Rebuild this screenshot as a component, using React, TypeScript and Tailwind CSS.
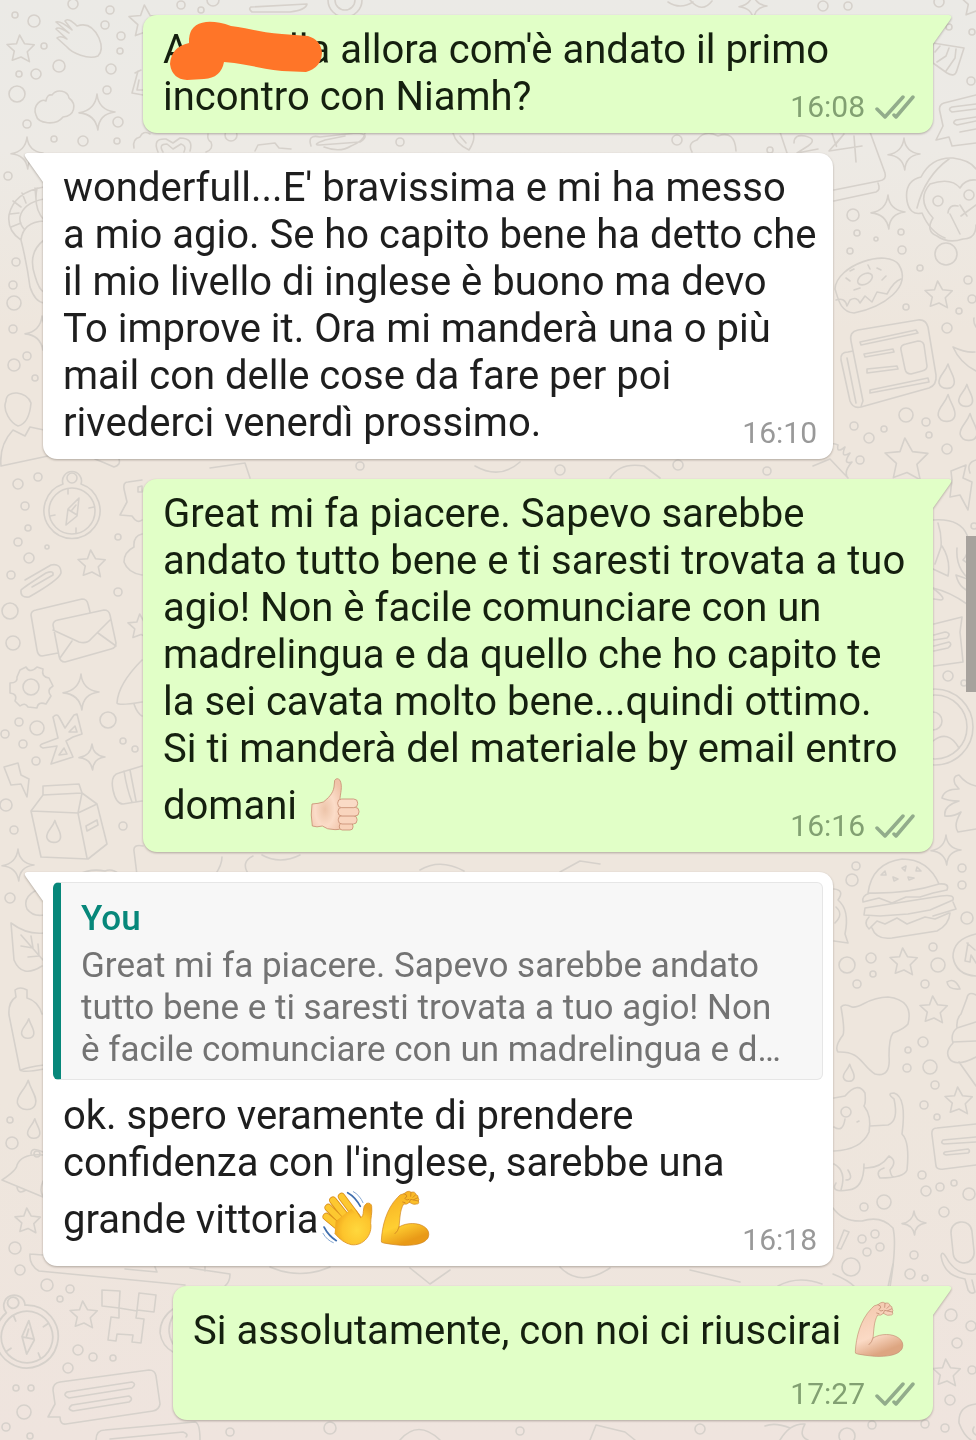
import type { ReactNode } from "react";

type Dot = [number, number, number];

const dots: Dot[] = [
  [15, 15, 3], [34, 21, 6], [73, 4, 5], [110, 10, 4], [105, 25, 4], [121, 36, 4], [120, 51, 3], [44, 46, 3],
  [19, 74, 3], [36, 74, 5], [59, 66, 6], [111, 69, 5], [17, 94, 8], [107, 90, 4], [27, 124, 4], [118, 122, 5],
  [54, 139, 3], [83, 141, 5], [117, 141, 3], [8, 176, 4], [181, 5, 4], [201, 10, 3], [231, 135, 6], [213, 0, 6],
  [823, 6, 5], [848, 6, 4], [939, 2, 5], [949, 27, 3], [972, 32, 3], [971, 81, 4], [677, 140, 5], [770, 150, 3],
  [853, 215, 6], [857, 233, 3], [876, 239, 2], [901, 232, 3], [850, 251, 3], [902, 250, 4], [920, 268, 3],
  [906, 307, 3], [968, 280, 4], [972, 299, 4], [959, 311, 3], [947, 328, 5], [906, 415, 7], [854, 426, 4],
  [869, 438, 5], [884, 429, 3], [926, 422, 4], [929, 435, 3], [947, 449, 5], [860, 460, 4], [678, 465, 5],
  [767, 471, 4], [16, 262, 4], [13, 285, 4], [14, 303, 7], [13, 329, 4], [27, 356, 4], [14, 365, 6], [35, 378, 3],
  [18, 484, 5], [38, 477, 4], [25, 506, 4], [28, 528, 3], [18, 542, 4], [47, 547, 2], [29, 558, 5], [11, 575, 4],
  [10, 611, 8], [13, 643, 7], [118, 537, 3], [118, 592, 4], [19, 722, 4], [5, 734, 4], [37, 728, 7], [23, 744, 4],
  [36, 761, 4], [108, 720, 8], [123, 741, 3], [135, 749, 3], [6, 805, 6], [14, 830, 4], [123, 826, 4],
  [948, 676, 5], [964, 683, 3], [974, 526, 3], [856, 866, 4], [852, 880, 6], [962, 868, 4], [962, 885, 4],
  [967, 918, 6], [847, 965, 8], [871, 958, 5], [873, 974, 3], [857, 984, 4], [933, 947, 4], [938, 965, 7],
  [925, 984, 4], [908, 1050, 3], [923, 1042, 5], [907, 1068, 4], [930, 1067, 7], [935, 1085, 4], [924, 1105, 4],
  [937, 1117, 3], [922, 1175, 4], [926, 1191, 5], [940, 1187, 4], [954, 1183, 3], [969, 1194, 6], [944, 1212, 5],
  [864, 1207, 4], [884, 1202, 7], [862, 1239, 4], [875, 1234, 4], [867, 1252, 4], [880, 1247, 4], [851, 1267, 9],
  [914, 1255, 4], [910, 1274, 5], [925, 1278, 3], [951, 1315, 6], [971, 1326, 5], [957, 1343, 5], [972, 1370, 4],
  [950, 1400, 5], [925, 1424, 4], [872, 1425, 4], [847, 1436, 8], [945, 1428, 4], [10, 898, 5], [10, 1120, 3],
  [12, 1143, 6], [15, 1248, 6], [20, 1270, 5], [47, 1285, 6], [70, 1289, 4], [60, 1299, 3], [78, 1350, 5],
  [93, 1357, 4], [113, 1358, 3], [68, 1368, 5], [16, 1388, 3], [31, 1388, 3], [24, 1412, 7], [6, 1427, 4], [30, 1436, 3],
  [230, 1432, 4], [330, 1428, 6], [520, 1431, 4], [700, 1429, 5], [360, 466, 4], [560, 470, 5], [400, 142, 4],
];

const stars: Dot[] = [
  [21, 49, 14], [146, 22, 17], [939, 295, 14], [907, 460, 22], [92, 564, 14], [141, 627, 13], [904, 962, 14],
  [934, 1010, 14], [959, 1101, 14], [947, 1373, 14], [28, 1221, 13], [84, 1315, 14], [976, 2, 16],
];

const sparks: Dot[] = [
  [97, 112, 18], [27, 153, 16], [904, 154, 16], [888, 212, 17], [81, 692, 18], [92, 757, 13], [18, 865, 16],
  [946, 850, 15], [914, 1223, 12], [753, 6, 14], [42, 333, 17],
];

const drops: Dot[] = [
  [947, 378, 10], [966, 397, 9], [947, 410, 11], [969, 429, 11], [849, 1074, 7], [28, 1030, 8],
  [27, 1097, 12], [34, 1130, 8], [54, 833, 9],
];

const starPath = "M-.1-1L.25-.38L.95-.3L.45.2L.6.9L0 .57L-.62.8L-.48.15L-1-.32L-.32-.38Z";
const sparkPath = "M0-1Q.08-.12 1 0Q.1.1 .05 1Q-.1.12-1 .05Q-.1-.1 0-1Z";
const dropPath = "M.1-1.4C.35-.5 .9 0 .7.6C.5 1.2-.6 1.2-.8.5C-.9-.2-.2-.5 .1-1.4Z";

function Shapes({ items, d }: { items: Dot[]; d: string }) {
  return (
    <>
      {items.map(([x, y, r]) => (
        <path key={`${x}-${y}`} d={d} transform={`translate(${x} ${y}) scale(${r})`} vectorEffect="non-scaling-stroke" />
      ))}
    </>
  );
}

function Compass({ x, y, s = 1, tilt = 0 }: { x: number; y: number; s?: number; tilt?: number }) {
  return (
    <g transform={`translate(${x} ${y}) scale(${s}) rotate(${tilt})`}>
      <path d="M-9-27A28 28 0 1 0 9-27A9.500 9.500 0 1 0-9-27Z" />
      <circle r="23" />
      <circle cy="-33" r="5" />
      <path d="M7-13L5 5L-6 14L-4-2ZM-3-1L5 4M0-1L4-6M-4-22L-4-17M4 22V17M-22 5L-17 4M22-4L17-3" />
    </g>
  );
}

function Wallpaper() {
  return (
    <svg
      aria-hidden="true"
      className="absolute inset-0 h-[1440px] w-full text-[#d6d1cb]"
      viewBox="0 0 976 1440"
      preserveAspectRatio="xMidYMin slice"
      fill="none"
      stroke="currentColor"
      strokeWidth="1.6"
      strokeLinecap="round"
      strokeLinejoin="round"
    >
      {dots.map(([x, y, r]) => (
        <circle key={`${x}-${y}`} cx={x} cy={y} r={r} />
      ))}
      <Shapes items={stars} d={starPath} />
      <Shapes items={sparks} d={sparkPath} />
      <Shapes items={drops} d={dropPath} />
      <Compass x={72} y={511} />
      <Compass x={27} y={1337} s={1.12} tilt={-22} />

      {/* glove, cloud, planet, ring */}
      <path d="M98 56C88 60 72 53 67 47L57 38Q60 35 67 39L56 29Q58 26 69 33L56 22Q60 20 72 30L65 21Q68 17 77 26Q91 21 99 38Q104 50 98 56Z" />
      <path d="M52 95C57 88 68 91 69 98C77 104 75 116 63 117C56 126 38 124 36 115C32 105 42 98 46 101Q47 94 52 95Z" />
      <path d="M135 73L141 70M138 71L132 93L143 95M139 80L137 90H143" />
      <circle cx="345" cy="0" r="17" /><circle cx="345" cy="0" r="10" />
      <path d="M251 7L307 4Q306 10 290 12L252 12Q248 9 251 7Z" />
      <path d="M134 148Q132 139 140 137Q143 130 150 134M208 134Q207 140 211 142Q214 149 206 152M158 152Q152 138 166 139L173 143L180 138Q194 138 190 151M163 152Q158 144 167 144L173 149L181 144Q187 146 184 152" />
      <path d="M311 146Q307 134 320 137L356 133Q372 134 360 142L320 145Q311 145 325 140L345 136M324 147Q340 153 351 146Q364 141 365 133" />
      <path d="M255 151L258 145L275 143L279 148L291 149M453 133Q456 144 469 150Q476 139 473 133M460 136L466 143" />
      <path d="M692 152Q687 143 697 140Q705 129 718 136Q735 130 736 151M668 2Q680 10 693 2M690 0Q702 14 712 1" />
      {/* fan, chat card and calendar */}
      <path d="M933 43L964 48L957 70Q955 78 947 73L933 63ZM940 46L935 52M949 48L946 56L937 62M956 49L955 58L946 71" />
      <path d="M976 95L944 103Q938 105 940 112L943 126L936 140L949 137L952 146L976 143M976 104L952 107Q947 109 952 112L976 109M976 117L956 120Q951 123 957 125L976 121M976 129L960 132" />
      <path d="M780 132L787 153M870 132L885 173Q887 180 879 181L834 190M834 201L876 192Q881 190 878 183M794 143Q794 134 805 136Q818 139 808 146L797 153L818 149M832 133Q838 152 836 144L844 134L829 151L862 146M854 136L856 162" />
      {/* monkey */}
      <path d="M922 213Q910 216 907 201Q904 181 921 177Q931 157 953 158Q970 160 976 169M922 213Q930 232 945 238M917 208Q925 176 949 159" />
      <path d="M976 180Q965 179 960 188Q951 177 930 184Q916 200 933 218Q925 231 937 236Q948 244 963 239Q976 239 976 225M950 214L960 234M960 205L967 216M976 205L961 216M948 213Q949 204 958 206" />
      <circle cx="938" cy="201" r="5" /><circle cx="969" cy="195" r="5" /><circle cx="946" cy="254" r="11" />
      {/* doughnut */}
      <path d="M835 289C836 265 888 248 899 265C912 287 884 307 854 313C840 312 838 298 835 289ZM836 300Q845 297 847 306L850 300Q857 296 860 303L865 296L872 302L877 292L887 294Q894 281 901 279" />
      <ellipse cx="865" cy="279" rx="8" ry="5" transform="rotate(-30 865 279)" />
      <path d="M846 278L850 281M854 290L860 288M877 268L881 270M868 265L870 269M882 280L886 276M850 271L854 269" />
      {/* newspaper */}
      <path d="M851 341Q849 332 858 330L918 320Q926 319 928 327L936 375Q937 385 929 388L861 407Q853 409 850 401L841 360Q840 352 848 352L853 351L863 401Q861 406 861 407M851 341L863 401M847 358L856 403" />
      <path d="M860 342L916 330L918 333L861 345ZM864 354L893 349L894 352L865 357ZM867 369L897 366L898 369L867 373ZM870 390L928 378L929 382L870 393ZM901 350Q900 345 906 344L918 341Q923 341 924 345L927 366Q927 370 922 371L911 374Q906 374 905 369Z" />
      <path d="M953 347Q966 353 975 352M953 347Q960 363 976 371M974 318Q973 322 976 327M970 473Q966 463 976 460M813 466L830 459L848 478M832 449Q829 441 838 445Q836 454 845 447Q840 459 850 453Q842 465 852 462Q843 472 848 478" />
      {/* roller and face on the left margin */}
      <path d="M44 187Q14 192 9 215Q7 231 21 240M44 199Q23 203 20 217Q19 223 24 229M21 240Q23 222 44 221M21 240Q27 264 30 287Q35 302 44 303M44 240Q27 253 35 276Q39 290 44 292M13 201L21 207M10 214L19 213M11 227L21 223M22 193L26 203M35 188L36 199M37 188Q33 208 44 220" />
      <path d="M6 401C6 389 27 391 31 403C30 414 27 424 18 426C11 423 2 411 6 401ZM1 466Q-1 445 13 430L19 433L25 436L30 427L44 430M1 466L48 456M95 459Q105 463 114 467Q121 465 119 459" />
      {/* paper clip and letters */}
      <path d="M25 580L51 565Q61 563 61 573Q59 580 29 597Q20 598 21 590Q24 587 46 573Q54 570 53 575L32 587" />
      <path d="M58 653L42 656Q38 656 37 650L31 615Q31 611 36 610L82 599Q87 599 88 604L90 612M53 625Q53 621 58 620L104 610Q109 610 110 615L116 643Q116 648 111 649L65 662Q60 662 59 656ZM53 630L79 642Q87 644 91 639L110 620M60 658L72 641M98 633L116 646" />
      {/* gear */}
      <path d="M20 670L26 667Q30 674 37 667L43 669Q41 677 49 678L53 686Q46 690 51 696L46 704Q38 701 37 708L28 707Q25 702 20 706L15 701Q18 694 10 693V683Q18 683 17 677Z" />
      <circle cx="31" cy="687" r="8" />
      <path d="M142 660Q118 684 117 703Q119 706 142 702M134 704Q137 713 142 716M142 480L128 482Q123 482 124 489L127 502L120 515L132 516Q137 524 142 520M138 487L142 486V492H138ZM142 534Q133 536 134 547Q124 552 124 562Q128 573 142 575" />
      <path d="M53 717Q57 713 59 717L65 728L74 715L77 714L82 734L73 737L66 741L73 757L51 764L57 746L43 748Q38 746 42 744L58 738ZM69 732L75 726L77 732ZM59 755L64 748L67 754Z" />
      <path d="M4 767L18 763L21 775L29 779L27 797L21 784L11 785ZM43 786L79 784L82 793L97 804L107 844L88 859L41 857L31 811L43 795ZM31 811L78 813L87 858M78 813L97 804M82 793L43 795M82 793L78 813M86 826L97 820L98 825L87 831Z" />
      <path d="M142 766L119 773Q110 775 113 790Q116 804 123 804L142 801M124 771Q127 790 132 802M130 770L136 801M143 846Q133 844 134 851L137 875M222 857Q222 865 215 875M249 875Q240 862 253 856M262 855Q280 865 300 855M78 875Q90 868 105 871Q112 868 119 874M420 870Q440 858 464 871M560 872L580 861L600 864" />
      {/* bolt, unicorn, banner, avatar, splat */}
      <path d="M951 471L966 465L963 478L972 482L968 510L960 495L950 497L952 480ZM933 520Q960 518 967 535Q971 551 963 560L976 569M938 523Q942 535 941 547L935 564M942 546Q951 560 948 576L933 569M957 548Q955 572 976 584M956 575L976 582M956 575Q960 592 976 592M933 588Q950 592 967 604M934 589Q947 599 941 600L934 599" />
      <path d="M934 624L962 617L960 632L963 662L934 666M934 635L945 632Q952 633 947 638L934 640M934 646L949 642Q953 644 948 648L934 651" />
      <circle cx="935" cy="727" r="38" /><circle cx="935" cy="727" r="32" /><circle cx="933" cy="721" r="9" />
      <path d="M933 741Q948 729 959 748M976 786Q966 784 959 775Q952 776 955 784L959 789Q944 789 942 798Q948 801 959 801Q943 806 945 816Q953 817 961 812Q953 825 958 832L976 829" />
      {/* burger */}
      <path d="M868 893Q872 863 902 859Q928 859 939 884Q908 894 868 893ZM939 884Q950 883 947 890L933 893L920 897L906 897L892 903L879 898L863 902Q861 896 870 893M865 908L941 896Q955 894 953 900L930 910L908 914L880 916L864 915ZM953 902L956 909L933 916M869 917Q863 923 869 929L877 921L885 924L897 918L907 924L925 917L935 919L949 913M872 928Q876 940 892 938L937 931Q949 925 950 913" />
      <path d="M881 875L885 871L886 875ZM893 877L898 879L894 881ZM902 868L906 866L905 871ZM908 877L914 878L909 880ZM917 867L921 871L916 871ZM834 889Q845 890 838 900Q850 910 845 934L848 943L834 941M836 907Q844 914 835 923" />
      {/* clock, map, cone */}
      <path d="M976 934Q953 939 953 957Q956 975 976 976M967 943L975 950M968 943L965 961L970 962L971 955L976 963M947 982Q955 977 960 989Q948 990 947 982ZM976 995Q968 991 967 998L961 1014Q956 1019 957 1028Q950 1034 953 1043Q945 1051 949 1058Q955 1068 976 1057M957 1028L976 1022M953 1042L976 1041M959 1062L976 1086" />
      <path d="M841 1007Q844 1003 852 1007C861 1009 867 997 888 997Q914 1000 908 1024Q904 1029 893 1033Q889 1038 889 1056Q891 1078 875 1074C861 1065 861 1051 838 1052Q834 1047 843 1035Q845 1030 841 1007Z" />
      {/* cat */}
      <path d="M834 1098L845 1096Q858 1081 865 1093Q866 1103 864 1106Q872 1116 869 1132Q861 1150 834 1151M870 1126L888 1125Q899 1121 894 1099Q886 1093 894 1093Q907 1097 902 1134Q910 1142 907 1170Q904 1178 880 1178Q875 1171 884 1168M864 1164Q864 1189 848 1190Q830 1193 836 1183M834 1164Q847 1171 841 1190M864 1168Q880 1169 889 1156Q898 1161 890 1170Q891 1177 894 1177M848 1170Q854 1180 846 1180M834 1127Q843 1133 845 1119M857 1122L859 1121" />
      <circle cx="846" cy="1112" r="5" />
      <path d="M976 1124L937 1128Q931 1128 932 1135L936 1166Q937 1170 944 1169L976 1165M976 1137L943 1140Q940 1143 944 1144L976 1142M945 1152L968 1149Q971 1151 968 1153L946 1155Q942 1154 945 1152ZM833 1208Q843 1222 862 1221Q881 1215 893 1228Q897 1244 890 1287M833 1274Q848 1280 855 1287M844 1230L849 1232L841 1249L837 1248Z" />
      {/* microphone */}
      <rect x="952" y="1222" width="21" height="41" rx="10" transform="rotate(-6 962 1242)" />
      <path d="M976 1274Q956 1276 946 1257Q942 1250 941 1256Q944 1276 965 1279L968 1290Q971 1295 975 1292L972 1280" />
      <path d="M976 1404Q958 1406 959 1423Q964 1436 971 1440M974 1427Q971 1432 976 1435M780 1440Q790 1423 805 1424Q798 1436 808 1440M790 1428Q775 1422 765 1426M778 1286Q798 1275 822 1284M888 1287L893 1264" />
      {/* leaf, bottle and bell */}
      <path d="M11 923Q27 935 44 933M11 923L14 960Q22 979 42 966M21 935L43 960M21 946L33 948L31 936M28 957L39 956L38 944M44 887Q21 895 27 909Q33 917 44 915M16 997L15 990Q20 986 27 990V998Q38 1001 42 1014M16 997Q8 1002 9 1015L20 1070Q23 1073 44 1069M21 1070Q28 1067 44 1065" />
      <path d="M2 1180Q17 1170 17 1165Q22 1153 43 1155M2 1180L43 1197M17 1187Q18 1195 26 1190M31 1154Q31 1146 43 1152M43 1181Q39 1191 43 1196" /><circle cx="37" cy="1154" r="3" />
      {/* skateboard, pixel art, chat cards */}
      <path d="M30 1254L43 1255M30 1254Q29 1265 39 1271L185 1285M155 1267L157 1272L125 1269M190 1268L230 1274Q230 1282 225 1286M205 1267V1271M270 1267Q300 1280 330 1267M410 1268L430 1284L450 1270M560 1267Q580 1288 610 1268M690 1270L740 1282" />
      <path d="M102 1290L120 1291L119 1308L102 1306ZM139 1293L156 1295L154 1312L137 1310ZM119 1308L119 1318L111 1317L108 1340L116 1341L117 1334L133 1335L132 1342L141 1343L144 1319L136 1318L137 1311ZM173 1309Q160 1318 160 1333Q162 1346 173 1352M173 1316Q165 1330 173 1344" />
      <path d="M53 1390Q53 1383 60 1382L149 1370Q155 1370 156 1376L160 1404Q159 1410 153 1411L66 1424Q60 1425 60 1417L48 1417L55 1404ZM67 1392L132 1382Q137 1384 132 1388L69 1398Q62 1395 67 1392ZM72 1405L129 1396Q134 1399 129 1402L73 1411Q66 1409 72 1405ZM96 1440Q96 1430 105 1430L195 1422Q200 1423 200 1440M110 1439L183 1432Q189 1434 186 1437" />
      <path d="M400 1440Q418 1419 440 1440M590 1440L596 1425L625 1432L635 1440M475 466Q500 480 520 462M210 468L245 463L250 478M610 478Q620 462 644 466L660 478" />
    </svg>
  );
}

function Ticks() {
  return (
    <svg role="img" aria-label="Delivered" className="h-6 w-10" viewBox="0 0 40 24" fill="none" stroke="#92ac8b" strokeWidth="3.500" strokeLinecap="round" strokeLinejoin="round">
      <path d="M2 14L10 22L28 2M19 20L21 22L38 2" />
    </svg>
  );
}

function Time({ value, sent = false }: { value: string; sent?: boolean }) {
  return (
    <span className={`flex shrink-0 items-center gap-2.5 text-[30px] leading-8 ${sent ? "text-[#82a072]" : "text-[#999999]"}`}>
      <time>{value}</time>
      {sent && <Ticks />}
    </span>
  );
}

function Thumb() {
  return (
    <svg role="img" aria-label="Thumbs up" className="-ml-0.5 inline-block size-15 align-[-17px]" viewBox="75 51 180 180">
      <defs>
        <radialGradient id="thumbSkin" cx=".45" cy=".6" r=".65">
          <stop offset="0" stopColor="#edc4a9" />
          <stop offset=".5" stopColor="#fbdcc8" />
          <stop offset="1" stopColor="#f0c3a8" />
        </radialGradient>
      </defs>
      <g stroke="#c98f74" strokeWidth="2.500" strokeLinejoin="round">
        <path fill="url(#thumbSkin)" d="M96 135Q115 134 130 129C144 118 159 104 162 84L164 64Q171 54 180 64C189 83 180 105 180 122L185 205Q180 214 165 212Q140 212 127 201Q110 206 97 201Q91 168 96 135Z" />
        <rect fill="#f8d2b9" x="178" y="192" width="41" height="21" rx="9" />
        <rect fill="#f9d5be" x="175" y="170" width="56" height="25" rx="11" />
        <rect fill="#f9d5be" x="174" y="145" width="63" height="26" rx="12" />
        <rect fill="#fadbc6" x="173" y="120" width="60" height="26" rx="12" />
      </g>
    </svg>
  );
}

function Wave() {
  return (
    <svg role="img" aria-label="Waving hand" className="-ml-0.5 inline-block size-15 align-[-17px]" viewBox="45 63 180 180">
      <defs>
        <radialGradient id="palm" cx=".6" cy=".65" r=".6">
          <stop offset="0" stopColor="#ffd83d" />
          <stop offset=".65" stopColor="#fdc42c" />
          <stop offset="1" stopColor="#f0a71e" />
        </radialGradient>
      </defs>
      <g fill="none" strokeLinecap="round">
        <path stroke="#dc931f" strokeWidth="23" d="M119 83L165 145M93 94L145 160M79 116L135 172M73 143L130 190" />
        <path stroke="#fdc830" strokeWidth="18" d="M119 83L165 145" />
        <path stroke="#dc931f" strokeWidth="22" d="M96 98L145 160" />
        <path stroke="#fdc830" strokeWidth="18" d="M93 94L145 160" />
        <path stroke="#dc931f" strokeWidth="22" d="M83 120L135 172" />
        <path stroke="#fdc830" strokeWidth="18" d="M79 116L135 172" />
        <path stroke="#dc931f" strokeWidth="22" d="M78 147L130 190" />
        <path stroke="#fdc830" strokeWidth="18" d="M73 143L130 190" />
      </g>
      <path fill="url(#palm)" d="M101 157L148 119L176 146Q184 143 184 127Q184 109 194 103Q207 100 209 112C211 134 206 146 206 163C212 196 185 232 148 227Q122 222 98 193Z" />
      <path fill="none" stroke="#dc931f" strokeWidth="2.500" d="M162 124L176 146Q184 143 184 127Q184 109 194 103Q207 100 209 112C211 134 206 146 206 163C212 196 185 232 148 227Q122 222 98 193" />
      <path fill="none" stroke="#406fae" strokeWidth="5" strokeLinecap="round" d="M137 71Q160 84 175 112M66 174Q80 201 103 215" />
      <path fill="none" stroke="#86a8d2" strokeWidth="3" strokeLinecap="round" d="M154 68Q173 78 183 101M63 193Q75 214 94 221" />
    </svg>
  );
}

function Arm({ light = false }: { light?: boolean }) {
  const id = light ? "armLight" : "armGold";
  const line = light ? "#c48e74" : "#cf8420";
  return (
    <svg role="img" aria-label="Flexed biceps" className="-ml-0.5 inline-block size-15 align-[-17px]" viewBox="225 63 180 180">
      <defs>
        <linearGradient id={id} x1="0" y1="0" x2=".35" y2="1">
          <stop offset="0" stopColor={light ? "#f2c5aa" : "#f5aa20"} />
          <stop offset=".68" stopColor={light ? "#fbdac5" : "#ffcf32"} />
          <stop offset="1" stopColor={light ? "#dda581" : "#e99a17"} />
        </linearGradient>
      </defs>
      <path
        fill={`url(#${id})`}
        stroke={line}
        strokeWidth="2"
        strokeLinejoin="round"
        d="M244 215C246 172 259 120 292 86Q299 75 312 74Q326 62 333 70Q346 66 348 77Q356 79 354 86Q359 91 355 96Q359 105 350 105Q341 109 328 100Q321 108 311 105C299 125 300 150 297 174C320 160 355 160 374 174Q392 187 384 207C371 227 337 230 302 229Q270 226 251 222Q242 221 244 215Z"
      />
      <path fill="none" stroke={line} strokeWidth="2.500" strokeLinecap="round" d="M297 174Q294 187 285 194M312 74Q322 76 320 84Q309 88 321 93L327 91M333 70L332 82M347 77L339 85M354 86L341 92M328 100L332 91L355 96M308 99L315 101" />
    </svg>
  );
}

function Bubble({ sent = false, width, children }: { sent?: boolean; width: string; children: ReactNode }) {
  return (
    <article
      className={`relative ${width} max-w-full rounded-[14px] pt-[11px] pb-[13px] pl-5 drop-shadow-[0_1px_1px_rgba(80,70,60,0.4)] ${
        sent ? "self-end rounded-tr-none bg-[#e1ffc7] pr-[18px] text-[#15200f]" : "self-start rounded-tl-none bg-white pr-4 text-[#1e1e1e]"
      }`}
    >
      <svg
        aria-hidden="true"
        className={`absolute top-0 h-[30px] w-5 ${sent ? "left-full fill-[#e1ffc7]" : "right-full -scale-x-100 fill-white"}`}
        viewBox="0 0 20 30"
      >
        <path d="M-1 0H16Q20 1 17 5L0 29H-1Z" />
      </svg>
      {children}
    </article>
  );
}

function LastLine({ time, sent, tall, children }: { time: string; sent?: boolean; tall?: boolean; children: ReactNode }) {
  return (
    <div className="flex items-end justify-between gap-2">
      <p className={tall ? "leading-[67px]" : ""}>{children}</p>
      <div className="-mb-[3px]">
        <Time value={time} sent={sent} />
      </div>
    </div>
  );
}

export default function App() {
  return (
    <main className="relative min-h-screen overflow-hidden bg-[linear-gradient(#ebeae6_0px,#edeae5_150px,#eee6dd_330px,#eee6dd_1100px,#efe4de_1440px)] font-[Roboto,sans-serif] text-[40px] leading-[47px]">
      <Wallpaper />
      <div className="absolute top-[536px] right-0 z-10 h-[156px] w-2.5 bg-[#a7a29d]" />
      <section aria-label="Conversation" className="relative flex flex-col gap-5 px-[43px] pt-[15px] pb-5 whitespace-nowrap">
        <Bubble sent width="w-[790px]">
          <p>
            A<span className="inline-block w-[100px]" />
            lla allora com'è andato il primo
          </p>
          <LastLine sent time="16:08">incontro con Niamh?</LastLine>
          <svg aria-hidden="true" className="absolute top-0 left-0 h-[70px] w-[190px] fill-[#ff7528]" viewBox="143 14 190 70">
            <path d="M189 42V38Q190 23 206 21Q217 20 231 25C247 27 264 32 282 33L308 35Q321 39 322 52Q321 67 306 71L282 70C261 68 248 63 224 61Q221 77 204 78L187 79Q172 78 170 63Q171 46 189 42Z" />
          </svg>
        </Bubble>

        <Bubble width="w-[790px]">
          <p>
            wonderfull...E' bravissima e mi ha messo
            <br />a mio agio. Se ho capito bene ha detto che
            <br />il mio livello di inglese è buono ma devo
            <br />To improve it. Ora mi manderà una o più
            <br />mail con delle cose da fare per poi
          </p>
          <LastLine time="16:10">rivederci venerdì prossimo.</LastLine>
        </Bubble>

        <Bubble sent width="w-[790px]">
          <p>
            Great mi fa piacere. Sapevo sarebbe
            <br />andato tutto bene e ti saresti trovata a tuo
            <br />agio! Non è facile comunciare con un
            <br />madrelingua e da quello che ho capito te
            <br />la sei cavata molto bene...quindi ottimo.
            <br />Si ti manderà del materiale by email entro
          </p>
          <LastLine sent tall time="16:16">
            domani <Thumb />
          </LastLine>
        </Bubble>

        <Bubble width="w-[790px]">
          <blockquote className="-mt-px -mr-1.5 mb-3 -ml-2.5 overflow-hidden rounded-md border border-l-8 border-[#e6e6e6] border-l-[#07877a] bg-[#f7f7f7] pt-[15px] pb-2 pl-5 text-[35px] leading-[42px] text-[#737373]">
            <cite className="mb-[5px] block font-medium text-[#07877a] not-italic">You</cite>
            Great mi fa piacere. Sapevo sarebbe andato
            <br />tutto bene e ti saresti trovata a tuo agio! Non
            <br />è facile comunciare con un madrelingua e d…
          </blockquote>
          <p>
            ok. spero veramente di prendere
            <br />confidenza con l'inglese, sarebbe una
          </p>
          <LastLine tall time="16:18">
            grande vittoria<Wave /><Arm />
          </LastLine>
        </Bubble>

        <Bubble sent width="w-[760px]">
          <p className="leading-[67px]">
            Si assolutamente, con noi ci riuscirai <Arm light />
          </p>
          <div className="mt-3.5 -mb-[3px] flex justify-end">
            <Time sent value="17:27" />
          </div>
        </Bubble>
      </section>
    </main>
  );
}
